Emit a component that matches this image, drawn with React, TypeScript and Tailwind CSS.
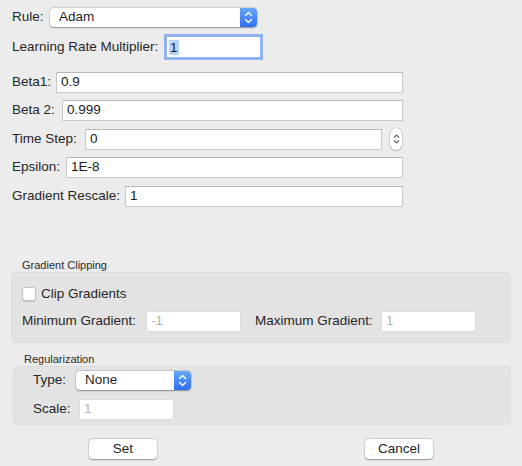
import type { ReactNode } from "react";

function Chevrons({ color = "#ffffff", w = 9, h = 13 }: { color?: string; w?: number; h?: number }) {
  return (
    <svg width={w} height={h} viewBox="0 0 9 13" fill="none">
      <path d="M1.5 4.5 L4.5 1.5 L7.5 4.5" stroke={color} strokeWidth="1.4" strokeLinecap="round" strokeLinejoin="round" />
      <path d="M1.5 8.5 L4.5 11.5 L7.5 8.5" stroke={color} strokeWidth="1.4" strokeLinecap="round" strokeLinejoin="round" />
    </svg>
  );
}

function Popup({ value, width }: { value: string; width: string }) {
  return (
    <div
      className={`flex h-[19px] ${width} items-stretch overflow-hidden rounded-[4px] bg-white shadow-[0_0.5px_1.5px_rgba(0,0,0,0.35),0_0_0_0.5px_rgba(0,0,0,0.12)]`}
    >
      <span className="flex flex-1 items-center pl-[9px] text-[13.5px] text-[#1f1f1f]">{value}</span>
      <span className="flex w-[17px] items-center justify-center bg-gradient-to-b from-[#67a7fb] to-[#2f6ef0]">
        <Chevrons />
      </span>
    </div>
  );
}

function TextField({ value, disabled, className = "" }: { value: string; disabled?: boolean; className?: string }) {
  return (
    <div
      className={`flex h-[21px] items-center border bg-white pl-[4px] text-[13.5px] ${
        disabled ? "border-[#dadada] text-[#b4b4b4]" : "border-[#c9c9c9] border-t-[#b9b9b9] text-[#1a1a1a]"
      } ${className}`}
    >
      {value}
    </div>
  );
}

function Row({ label, labelWidth, children, className = "" }: { label: string; labelWidth: string; children: ReactNode; className?: string }) {
  return (
    <div className={`flex items-center ${className}`}>
      <span className={`${labelWidth} shrink-0`}>{label}</span>
      {children}
    </div>
  );
}

export default function App() {
  return (
    <div
      className="h-[466px] w-[522px] overflow-hidden bg-[#ececec] text-[13.5px] text-[#262626]"
      style={{ fontFamily: '"Liberation Sans", Arial, sans-serif' }}
    >
      <div className="px-[12px] pt-[8px]">
        <Row label="Rule:" labelWidth="w-[38px]" className="h-[19px]">
          <Popup value="Adam" width="w-[207px]" />
        </Row>

        <Row label="Learning Rate Multiplier:" labelWidth="w-[155px]" className="mt-[10px] h-[20px]">
          <div className="flex h-[20px] w-[93px] items-center bg-white pl-[2px] text-[#1a1a1a] shadow-[0_0_0_3px_#8fb3ef]">
            <span className="bg-[#b5d3fb] px-[1px] leading-[15px]">1</span>
          </div>
        </Row>

        <div className="w-[391px]">
          <Row label="Beta1:" labelWidth="w-[44px]" className="mt-[15px]">
            <TextField value="0.9" className="flex-1" />
          </Row>
          <Row label="Beta 2:" labelWidth="w-[50px]" className="mt-[7px]">
            <TextField value="0.999" className="flex-1" />
          </Row>
          <Row label="Time Step:" labelWidth="w-[73px]" className="mt-[7px]">
            <TextField value="0" className="flex-1" />
            <div className="ml-[8px] mr-[1px] flex h-[22px] w-[12px] items-center justify-center rounded-full bg-white shadow-[0_0.5px_1.5px_rgba(0,0,0,0.35),0_0_0_0.5px_rgba(0,0,0,0.15)]">
              <Chevrons color="#5a5a5a" w={7} h={12} />
            </div>
          </Row>
          <Row label="Epsilon:" labelWidth="w-[54px]" className="mt-[7px]">
            <TextField value="1E-8" className="flex-1" />
          </Row>
          <Row label="Gradient Rescale:" labelWidth="w-[113px]" className="mt-[8px]">
            <TextField value="1" className="flex-1" />
          </Row>
        </div>
      </div>

      <div className="mt-[51px] h-[14px] pl-[22px] text-[11px] leading-[14px] text-[#2b2b2b]">Gradient Clipping</div>
      <div className="ml-[11px] mr-[11px] h-[71px] rounded-[5px] border border-[#dcdcdc] bg-[#e3e3e3] px-[10px] pt-[14px]">
        <div className="flex h-[14px] items-center">
          <span className="h-[14px] w-[14px] rounded-[3px] border border-[#c4c4c4] bg-white shadow-[0_0.5px_1px_rgba(0,0,0,0.15)]" />
          <span className="ml-[5px]">Clip Gradients</span>
        </div>
        <div className="mt-[10px] flex items-center">
          <span className="w-[124px]">Minimum Gradient:</span>
          <TextField value="-1" disabled className="h-[19px] w-[95px]" />
          <span className="ml-[14px] w-[126px]">Maximum Gradient:</span>
          <TextField value="1" disabled className="h-[19px] w-[95px]" />
        </div>
      </div>

      <div className="mt-[9px] h-[14px] pl-[24px] text-[11px] leading-[14px] text-[#2b2b2b]">Regularization</div>
      <div className="ml-[13px] mr-[11px] h-[59px] rounded-[5px] border border-[#dcdcdc] bg-[#e3e3e3] pl-[19px] pt-[4px]">
        <Row label="Type:" labelWidth="w-[43px]" className="h-[19px]">
          <Popup value="None" width="w-[115px]" />
        </Row>
        <Row label="Scale:" labelWidth="w-[46px]" className="mt-[9px]">
          <TextField value="1" disabled className="h-[19px] w-[95px]" />
        </Row>
      </div>

      <div className="mt-[14px] flex">
        <button className="ml-[89px] h-[20px] w-[68px] rounded-[4px] bg-white text-[13.5px] text-[#1f1f1f] shadow-[0_0.5px_1.5px_rgba(0,0,0,0.35),0_0_0_0.5px_rgba(0,0,0,0.12)]">
          Set
        </button>
        <button className="ml-[208px] h-[20px] w-[68px] rounded-[4px] bg-white text-[13.5px] text-[#1f1f1f] shadow-[0_0.5px_1.5px_rgba(0,0,0,0.35),0_0_0_0.5px_rgba(0,0,0,0.12)]">
          Cancel
        </button>
      </div>
    </div>
  );
}
